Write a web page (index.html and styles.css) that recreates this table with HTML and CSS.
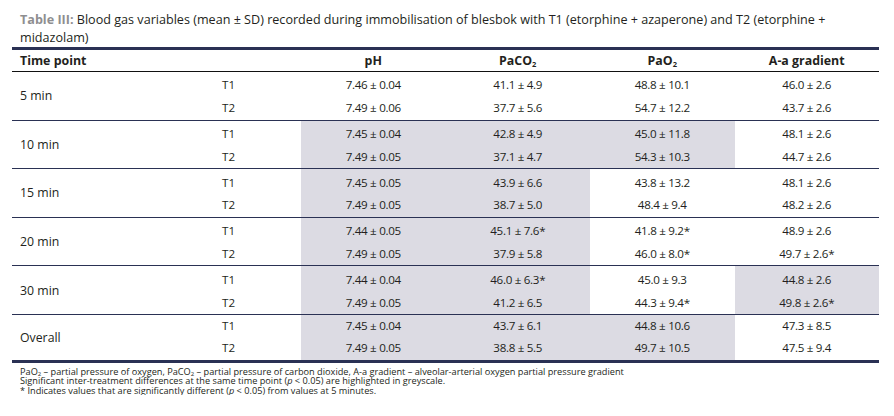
FILE: index.html
```html
<!DOCTYPE html>
<html>
<head>
<meta charset="utf-8">
<link rel="stylesheet" href="styles.css">
</head>
<body>
<div class="wrap">
  <p class="caption"><span class="label">Table III:</span> Blood gas variables (mean ± SD) recorded during immobilisation of blesbok with T1 (etorphine + azaperone) and T2 (etorphine + midazolam)</p>
  <table class="data">
    <thead>
      <tr>
        <th class="c-time">Time point</th>
        <th class="c-trt"></th>
        <th>pH</th>
        <th>PaCO<sub>2</sub></th>
        <th>PaO<sub>2</sub></th>
        <th>A-a gradient</th>
      </tr>
    </thead>
    <tbody class="grp">
      <tr class="r1"><td class="c-time" rowspan="2">5 min</td><td class="c-trt">T1</td><td>7.46 ± 0.04</td><td>41.1 ± 4.9</td><td>48.8 ± 10.1</td><td>46.0 ± 2.6</td></tr>
      <tr class="r2"><td class="c-trt">T2</td><td>7.49 ± 0.06</td><td>37.7 ± 5.6</td><td>54.7 ± 12.2</td><td>43.7 ± 2.6</td></tr>
    </tbody>
    <tbody class="grp">
      <tr class="r1"><td class="c-time" rowspan="2">10 min</td><td class="c-trt">T1</td><td class="hl">7.45 ± 0.04</td><td class="hl">42.8 ± 4.9</td><td class="hl">45.0 ± 11.8</td><td>48.1 ± 2.6</td></tr>
      <tr class="r2"><td class="c-trt">T2</td><td class="hl">7.49 ± 0.05</td><td class="hl">37.1 ± 4.7</td><td class="hl">54.3 ± 10.3</td><td>44.7 ± 2.6</td></tr>
    </tbody>
    <tbody class="grp">
      <tr class="r1"><td class="c-time" rowspan="2">15 min</td><td class="c-trt">T1</td><td class="hl">7.45 ± 0.05</td><td class="hl">43.9 ± 6.6</td><td>43.8 ± 13.2</td><td>48.1 ± 2.6</td></tr>
      <tr class="r2"><td class="c-trt">T2</td><td class="hl">7.49 ± 0.05</td><td class="hl">38.7 ± 5.0</td><td>48.4 ± 9.4</td><td>48.2 ± 2.6</td></tr>
    </tbody>
    <tbody class="grp">
      <tr class="r1"><td class="c-time" rowspan="2">20 min</td><td class="c-trt">T1</td><td class="hl">7.44 ± 0.05</td><td class="hl">45.1 ± 7.6*</td><td>41.8 ± 9.2*</td><td>48.9 ± 2.6</td></tr>
      <tr class="r2"><td class="c-trt">T2</td><td class="hl">7.49 ± 0.05</td><td class="hl">37.9 ± 5.8</td><td>46.0 ± 8.0*</td><td>49.7 ± 2.6*</td></tr>
    </tbody>
    <tbody class="grp">
      <tr class="r1"><td class="c-time" rowspan="2">30 min</td><td class="c-trt">T1</td><td class="hl">7.44 ± 0.04</td><td class="hl">46.0 ± 6.3*</td><td>45.0 ± 9.3</td><td class="hl">44.8 ± 2.6</td></tr>
      <tr class="r2"><td class="c-trt">T2</td><td class="hl">7.49 ± 0.05</td><td class="hl">41.2 ± 6.5</td><td>44.3 ± 9.4*</td><td class="hl">49.8 ± 2.6*</td></tr>
    </tbody>
    <tbody class="grp last">
      <tr class="r1"><td class="c-time" rowspan="2">Overall</td><td class="c-trt">T1</td><td class="hl">7.45 ± 0.04</td><td class="hl">43.7 ± 6.1</td><td class="hl">44.8 ± 10.6</td><td>47.3 ± 8.5</td></tr>
      <tr class="r2"><td class="c-trt">T2</td><td class="hl">7.49 ± 0.05</td><td class="hl">38.8 ± 5.5</td><td class="hl">49.7 ± 10.5</td><td>47.5 ± 9.4</td></tr>
    </tbody>
  </table>
  <div class="notes">
    <p>PaO<sub>2</sub> – partial pressure of oxygen, PaCO<sub>2</sub> – partial pressure of carbon dioxide, A-a gradient – alveolar-arterial oxygen partial pressure gradient</p>
    <p>Significant inter-treatment differences at the same time point (<i>p</i> &lt; 0.05) are highlighted in greyscale.</p>
    <p>* Indicates values that are significantly different (<i>p</i> &lt; 0.05) from values at 5 minutes.</p>
  </div>
</div>
</body>
</html>
```

FILE: styles.css
```css
html, body {
  margin: 0;
  padding: 0;
  background: #ffffff;
}

body {
  font-family: "Open Sans", "Liberation Sans", sans-serif;
  color: #231f20;
}

.wrap {
  width: 867px;
  margin-left: 12px;
  padding-top: 11px;
}

.caption {
  margin: 0;
  padding-left: 8px;
  padding-right: 50px;
  font-size: 12.6px;
  line-height: 18px;
  height: 36px;
}

.label {
  font-weight: 700;
  color: #8e8e90;
}

.data {
  width: 867px;
  border-collapse: collapse;
  table-layout: fixed;
  font-size: 11.6px;
  letter-spacing: -0.3px;
}

.data th,
.data td {
  padding: 0;
  text-align: center;
  vertical-align: middle;
  white-space: nowrap;
}

.data thead tr {
  border-top: 3px solid #2a3154;
  border-bottom: 1px solid #111111;
  height: 23px;
}

.data th {
  font-weight: 700;
  font-size: 12.4px;
  letter-spacing: 0;
}

.data .c-time {
  width: 200px;
  text-align: left;
  padding-left: 8px;
  box-sizing: border-box;
}

.data .c-trt {
  width: 89px;
  text-align: left;
  padding-left: 10px;
  box-sizing: border-box;
}

.data td.c-time {
  font-size: 12.3px;
  letter-spacing: 0;
}

.data td.c-trt {
  letter-spacing: 0;
}

.data sub {
  font-size: 7.5px;
  vertical-align: -2px;
  line-height: 0;
}

.grp {
  border-bottom: 1px solid #2a3154;
}

.grp.last {
  border-bottom: 3px solid #2a3154;
}

.grp tr {
  height: 24.3px;
}

.grp .r1 td {
  padding-top: 2px;
}

.grp .r1 td.c-time {
  padding-top: 0;
}

.grp.last tr.r1 {
  height: 21px;
}

.grp.last tr.r1 td {
  padding-top: 0;
}

.grp.last tr.r2 {
  height: 26px;
}

.hl {
  background: #dcdbe3;
}

.notes {
  padding-left: 8px;
  padding-top: 4px;
  font-size: 9.2px;
  line-height: 9.5px;
}

.notes p {
  margin: 0;
}

.notes sub {
  font-size: 6px;
  vertical-align: -1px;
  line-height: 0;
}
```
